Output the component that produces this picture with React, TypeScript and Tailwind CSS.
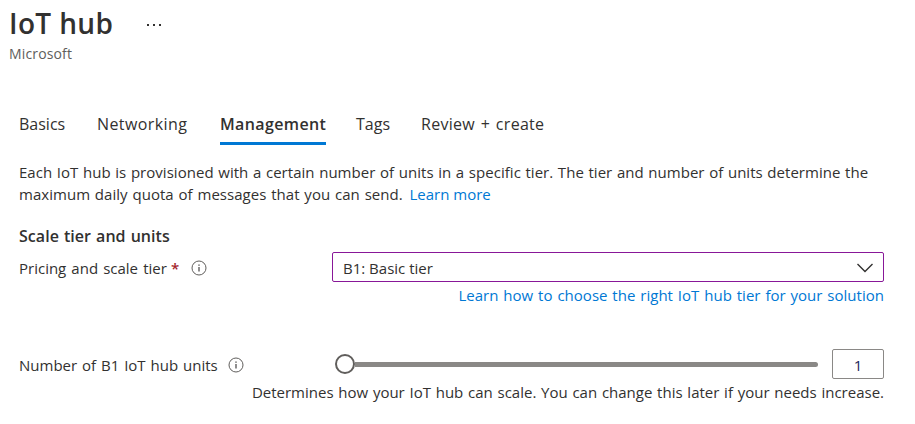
import React from "react";

function InfoIcon() {
  return (
    <svg width="16" height="16" viewBox="0 0 16 16" fill="none" className="shrink-0">
      <circle cx="8" cy="8" r="7" stroke="#605e5c" strokeWidth="1" />
      <path d="M8 7v4.5" stroke="#323130" strokeWidth="1.1" />
      <path d="M8 4.5v1.2" stroke="#323130" strokeWidth="1.2" />
    </svg>
  );
}

const tabs = [
  { label: "Basics", box: "w-[46px] mr-8" },
  { label: "Networking", box: "w-[91px] mr-[32px] tracking-[0.4px]" },
  { label: "Management", box: "w-[106px] mr-[30px] tracking-[0.37px]", active: true },
  { label: "Tags", box: "w-[34px] mr-[31px]" },
  { label: "Review + create", box: "w-[124px] tracking-[0.3px] [word-spacing:1.2px]" },
];

export default function App() {
  return (
    <main className="flex h-[424px] w-[915px] flex-col overflow-hidden bg-white font-['Open_Sans','Noto_Sans',sans-serif] text-[15px] leading-[22px] font-normal whitespace-nowrap text-[#323130]">
      <header className="pl-[9px]">
        <div className="flex h-[43px] items-center pt-[3px]">
          <h1 className="w-[105px] text-[28px] leading-[38px] font-semibold tracking-[0.35px]">IoT hub</h1>
          <svg width="16" height="4" viewBox="0 0 16 4" className="mt-[4px] ml-[32px]" fill="#323130">
            <rect x="1" y="1" width="2" height="2" />
            <rect x="7" y="1" width="2" height="2" />
            <rect x="13" y="1" width="2" height="2" />
          </svg>
        </div>
        <p className="text-[14px] leading-[22px] tracking-[0.15px] text-[#605e5c]">Microsoft</p>
      </header>

      <nav className="mt-[48px] flex h-[32px] pl-[19px] text-[16px]">
        {tabs.map((t) => (
          <div
            key={t.label}
            className={`${t.box} h-[32px] leading-[22px] ${t.active ? "border-b-[3px] border-[#0078d4] font-semibold" : ""}`}
          >
            {t.label}
          </div>
        ))}
      </nav>

      <section className="pt-[16px] pl-[19px]">
        <p className="tracking-[0.03px] [word-spacing:0.7px]">Each IoT hub is provisioned with a certain number of units in a specific tier. The tier and number of units determine the</p>
        <p>
          <span className="tracking-[0.03px] [word-spacing:0.9px]">maximum daily quota of messages that you can send. </span>
          <a className="ml-[2px] text-[#0078d4]">Learn more</a>
        </p>
        <h2 className="mt-[20px] text-[16px] font-semibold tracking-[0.05px] [word-spacing:0.8px]">Scale tier and units</h2>
      </section>

      <section className="mt-[5px] flex pl-[19px]">
        <div className="flex h-[30px] w-[313px] items-center pt-[2px]">
          <span className="w-[148px] [word-spacing:1.2px]">Pricing and scale tier</span>
          <span className="ml-[4px] w-[8px] font-semibold text-[#a4262c]">*</span>
          <span className="ml-[12px]"><InfoIcon /></span>
        </div>
        <div className="w-[552px]">
          <div className="flex h-[30px] items-center justify-between rounded-[2px] border border-[#881798] pr-[9px] pl-[10px]">
            <span className="pt-[2px]">B1: Basic tier</span>
            <svg width="18" height="10" viewBox="0 0 18 10" fill="none" className="mt-px">
              <path d="M1.5 1l7.5 7.5L16.5 1" stroke="#323130" strokeWidth="1.4" />
            </svg>
          </div>
          <a className="mt-[2px] block text-right tracking-[0.02px] text-[#0078d4] [word-spacing:0.95px]">Learn how to choose the right IoT hub tier for your solution</a>
        </div>
      </section>

      <section className="mt-[43px] flex pl-[19px]">
        <div className="flex h-[30px] w-[316px] items-center pt-[2px]">
          <span className="w-[199px] [word-spacing:1px]">Number of B1 IoT hub units</span>
          <span className="ml-[10px]"><InfoIcon /></span>
        </div>
        <div className="flex h-[30px] w-[483px] items-center">
          <div className="size-[20px] shrink-0 rounded-full border-2 border-[#605e5c] bg-white" />
          <div className="h-[5px] flex-1 rounded-r-[3px] bg-[#8a8886]" />
        </div>
        <div className="ml-[14px] flex h-[30px] w-[52px] items-center justify-center rounded-[2px] border border-[#8a8886] pt-px text-[#201f5a]">1</div>
      </section>
      <p className="mt-[2px] mr-[31px] text-right [word-spacing:0.85px]">Determines how your IoT hub can scale. You can change this later if your needs increase.</p>
    </main>
  );
}
